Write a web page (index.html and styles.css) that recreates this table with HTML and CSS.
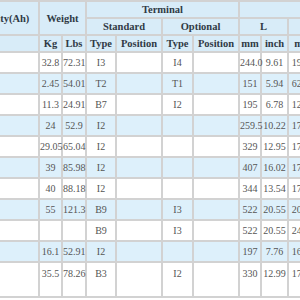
FILE: index.html
```html
<!DOCTYPE html>
<html>
<head>
<meta charset="utf-8">
<link rel="stylesheet" href="styles.css">
</head>
<body>
<div class="wrap">
<table class="spec">
<colgroup>
<col class="c-cap"><col class="c-kg"><col class="c-lbs"><col class="c-type"><col class="c-pos"><col class="c-type2"><col class="c-pos"><col class="c-mm"><col class="c-inch"><col class="c-mm2"><col class="c-inch2"><col class="c-mm2"><col class="c-inch2">
</colgroup>
<thead>
<tr><th rowspan="2">Capacity(Ah)</th><th rowspan="2" colspan="2">Weight</th><th colspan="4">Terminal</th><th colspan="6"></th></tr>
<tr><th colspan="2">Standard</th><th colspan="2">Optional</th><th colspan="2">L</th><th colspan="2">W</th><th colspan="2">H</th></tr>
<tr><th></th><th>Kg</th><th>Lbs</th><th>Type</th><th>Position</th><th>Type</th><th>Position</th><th>mm</th><th>inch</th><th>mm</th><th>inch</th><th>mm</th><th>inch</th></tr>
</thead>
<tbody>
<tr><td></td><td>32.8</td><td>72.31</td><td>I3</td><td></td><td>I4</td><td></td><td>244.0</td><td>9.61</td><td>190.0</td><td>7.48</td><td>160</td><td>6.30</td></tr>
<tr><td></td><td>2.45</td><td>54.01</td><td>T2</td><td></td><td>T1</td><td></td><td>151</td><td>5.94</td><td>62.50</td><td>2.46</td><td>94</td><td>3.70</td></tr>
<tr><td></td><td>11.3</td><td>24.91</td><td>B7</td><td></td><td>I2</td><td></td><td>195</td><td>6.78</td><td>125.0</td><td>4.92</td><td>170</td><td>6.69</td></tr>
<tr><td></td><td>24</td><td>52.9</td><td>I2</td><td></td><td></td><td></td><td>259.5</td><td>10.22</td><td>172.0</td><td>6.77</td><td>205</td><td>8.07</td></tr>
<tr><td></td><td>29.05</td><td>65.04</td><td>I2</td><td></td><td></td><td></td><td>329</td><td>12.95</td><td>172.0</td><td>6.77</td><td>214</td><td>8.43</td></tr>
<tr><td></td><td>39</td><td>85.98</td><td>I2</td><td></td><td></td><td></td><td>407</td><td>16.02</td><td>173.0</td><td>6.81</td><td>210</td><td>8.27</td></tr>
<tr><td></td><td>40</td><td>88.18</td><td>I2</td><td></td><td></td><td></td><td>344</td><td>13.54</td><td>172.0</td><td>6.77</td><td>280</td><td>11.02</td></tr>
<tr><td></td><td>55</td><td>121.3</td><td>B9</td><td></td><td>I3</td><td></td><td>522</td><td>20.55</td><td>208.0</td><td>8.19</td><td>215</td><td>8.46</td></tr>
<tr><td></td><td></td><td></td><td>B9</td><td></td><td>I3</td><td></td><td>522</td><td>20.55</td><td>240.0</td><td>9.45</td><td>218</td><td>8.58</td></tr>
<tr><td></td><td>16.1</td><td>52.91</td><td>I2</td><td></td><td></td><td></td><td>197</td><td>7.76</td><td>165.0</td><td>6.50</td><td>170</td><td>6.69</td></tr>
<tr class="tall"><td></td><td>35.5</td><td>78.26</td><td>B3</td><td></td><td>I2</td><td></td><td>330</td><td>12.99</td><td>171.0</td><td>6.73</td><td>214</td><td>8.43</td></tr>
</tbody>
</table>
</div>
</body>
</html>
```

FILE: styles.css
```css
html, body {
  margin: 0;
  padding: 0;
  background: #ffffff;
}
.wrap {
  width: 300px;
  height: 300px;
  overflow: hidden;
}
.spec {
  border-collapse: collapse;
  table-layout: fixed;
  width: 415px;
  margin-left: -42px;
  font-family: "Liberation Serif", "Times New Roman", serif;
}
.c-cap { width: 80px; }
.c-kg { width: 23px; }
.c-lbs { width: 24px; }
.c-type { width: 30px; }
.c-type2 { width: 31px; }
.c-pos { width: 46px; }
.c-mm { width: 22px; }
.c-inch { width: 27px; }
.c-mm2 { width: 30px; }
.c-inch2 { width: 26px; }
.spec th, .spec td {
  border: 2px solid #d2d2d2;
  padding: 0;
  text-align: center;
  white-space: nowrap;
  overflow: visible;
}
.spec th {
  background: #d8ecf8;
  color: #303a45;
  font-weight: bold;
  font-size: 10.5px;
  line-height: 11px;
  height: 11px;
  padding: 2px 0;
  vertical-align: middle;
}
.spec td {
  color: #555555;
  font-size: 10px;
  line-height: 13px;
  height: 13px;
  padding: 3px 0;
  vertical-align: top;
}
.spec tbody tr:nth-child(even) td {
  background: #ddf0fb;
}
.spec tbody tr.tall td {
  height: 26px;
  padding-top: 4px;
  padding-bottom: 3px;
}
```
